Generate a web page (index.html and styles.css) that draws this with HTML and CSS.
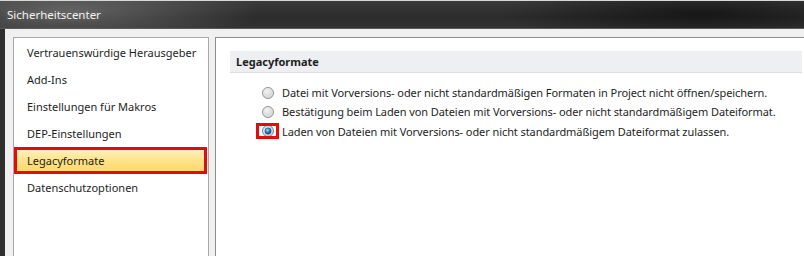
FILE: index.html
```html
<!DOCTYPE html>
<html lang="de">
<head>
<meta charset="utf-8">
<link rel="stylesheet" href="styles.css">
</head>
<body>
<div class="window">
  <div class="titlebar"><span class="title">Sicherheitscenter</span></div>
  <div class="client">
    <div class="nav">
      <div class="nav-item">Vertrauenswürdige Herausgeber</div>
      <div class="nav-item">Add-Ins</div>
      <div class="nav-item">Einstellungen für Makros</div>
      <div class="nav-item">DEP-Einstellungen</div>
      <div class="nav-item selected">Legacyformate</div>
      <div class="nav-item">Datenschutzoptionen</div>
    </div>
    <div class="content">
      <div class="section-head">Legacyformate</div>
      <div class="options">
        <div class="option">
          <span class="radio-wrap"><svg class="radio" viewBox="0 0 13 13" width="12" height="12"><defs><radialGradient id="g1" cx="0.4" cy="0.35" r="0.7"><stop offset="0" stop-color="#f4f4f4"/><stop offset="1" stop-color="#c9c9c9"/></radialGradient></defs><circle cx="6.5" cy="6.5" r="6" fill="url(#g1)" stroke="#8f8f8f"/><circle cx="6.5" cy="6.5" r="4.5" fill="none" stroke="#e8e8e8" stroke-width="0.8"/></svg></span>
          <span>Datei mit Vorversions- oder nicht standardmäßigen Formaten in Project nicht öffnen/speichern.</span>
        </div>
        <div class="option">
          <span class="radio-wrap"><svg class="radio" viewBox="0 0 13 13" width="12" height="12"><circle cx="6.5" cy="6.5" r="6" fill="url(#g1)" stroke="#8f8f8f"/><circle cx="6.5" cy="6.5" r="4.5" fill="none" stroke="#e8e8e8" stroke-width="0.8"/></svg></span>
          <span>Bestätigung beim Laden von Dateien mit Vorversions- oder nicht standardmäßigem Dateiformat.</span>
        </div>
        <div class="option">
          <span class="radio-wrap marked"><svg class="radio" viewBox="0 0 13 13" width="12" height="12"><defs><radialGradient id="g2" cx="0.4" cy="0.35" r="0.65"><stop offset="0" stop-color="#9fe3ff"/><stop offset="0.5" stop-color="#2d8fd0"/><stop offset="1" stop-color="#0b3f6e"/></radialGradient></defs><circle cx="6.5" cy="6.5" r="6" fill="url(#g1)" stroke="#6f7f8f"/><circle cx="6.5" cy="6.5" r="3.4" fill="url(#g2)" stroke="#194e7a" stroke-width="0.6"/></svg></span>
          <span>Laden von Dateien mit Vorversions- oder nicht standardmäßigem Dateiformat zulassen.</span>
        </div>
      </div>
    </div>
  </div>
</div>
</body>
</html>
```
FILE: styles.css
```css
html, body {
  margin: 0;
  padding: 0;
}
body {
  width: 804px;
  height: 256px;
  overflow: hidden;
  background: #f0f0f0;
  font-family: "Noto Sans", "Open Sans", sans-serif;
  font-size: 11px;
  color: #1e1e1e;
}
.window {
  display: flex;
  flex-direction: column;
  height: 256px;
}
.titlebar {
  height: 27px;
  border-top: 1px solid #d8d8d8;
  border-bottom: 1px solid #5a5a5a;
  background:
    radial-gradient(ellipse 190px 34px at 70px 10px, rgba(130,130,130,0.6), rgba(130,130,130,0) 100%),
    radial-gradient(ellipse 200px 30px at 700px 12px, rgba(0,0,0,0.5), rgba(0,0,0,0) 100%),
    linear-gradient(#3a3a3a, #2c2c2c 60%, #333 100%);
  display: flex;
  align-items: center;
  padding-left: 7px;
}
.title {
  color: #f2f2f2;
  font-size: 11.5px;
  text-shadow: 0 0 6px rgba(255,255,255,0.25);
}
.client {
  flex: 1;
  display: flex;
  gap: 6px;
  padding: 8px 0 0 8px;
  border-left: 5px solid #2f2f2f;
  min-height: 0;
}
.nav {
  width: 194px;
  border: 1px solid #a9a9a9;
  border-bottom: none;
  background: #fff;
  padding-top: 1px;
}
.nav-item {
  height: 27px;
  line-height: 27px;
  padding-left: 13px;
  white-space: nowrap;
  box-sizing: border-box;
}
.nav-item.selected {
  border: 3px solid #e30b0b;
  padding-left: 10px;
  line-height: 21px;
  margin-right: 1px;
  background: linear-gradient(#fff1bd, #fee48f 45%, #fdd86c 100%);
}
.content {
  flex: 1;
  border: 1px solid #8d8d8d;
  border-right: none;
  border-bottom: none;
  background: #fff;
  padding: 13px 2px 0 14px;
}
.section-head {
  height: 21px;
  line-height: 21px;
  background: #eeeff2;
  border-bottom: 1px solid #dfe0e3;
  padding-left: 6px;
  font-weight: bold;
}
.options {
  padding: 10px 0 0 28px;
  letter-spacing: -0.08px;
}
.option {
  height: 19.3px;
  display: flex;
  align-items: center;
  white-space: nowrap;
}
.radio-wrap {
  width: 19px;
  height: 12px;
  display: flex;
  align-items: center;
  justify-content: center;
  margin-right: 5px;
}
.radio-wrap.marked {
  outline: 3px solid #e30b0b;
  outline-offset: -1px;
}
.radio {
  display: block;
}
```
